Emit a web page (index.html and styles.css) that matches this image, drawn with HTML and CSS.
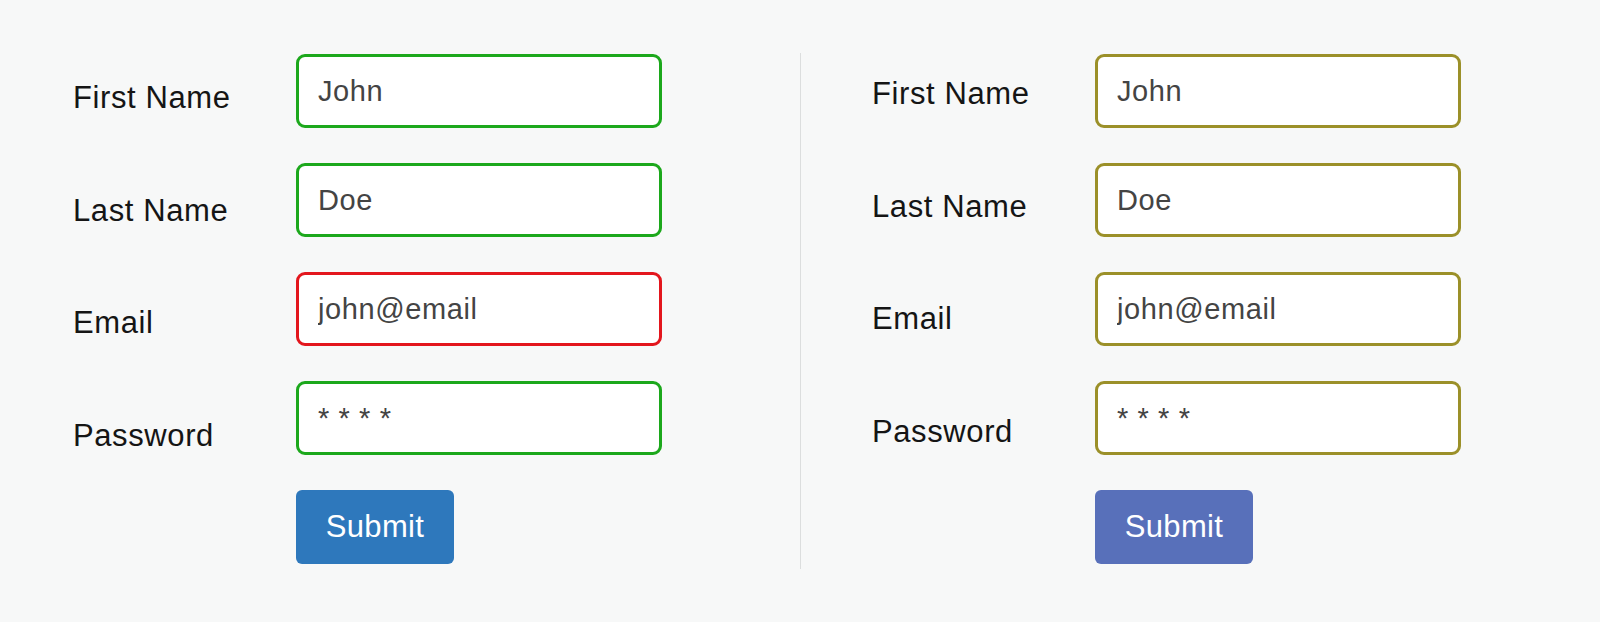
FILE: index.html
```html
<!DOCTYPE html>
<html lang="en">
<head>
  <meta charset="UTF-8" />
  <title>Form Validation States</title>
  <link rel="stylesheet" href="styles.css">
</head>
<body>

  <div class="page">

    <form class="signup-form validated">
      <div class="labels">
        <label for="first-a">First Name</label>
        <label for="last-a">Last Name</label>
        <label for="email-a">Email</label>
        <label for="pass-a">Password</label>
      </div>
      <div class="fields">
        <input id="first-a" class="field ok" type="text" value="John" />
        <input id="last-a" class="field ok" type="text" value="Doe" />
        <input id="email-a" class="field error" type="text" value="john@email" />
        <input id="pass-a" class="field ok" type="text" value="* * * *" />
        <button type="button" class="submit-button">Submit</button>
      </div>
    </form>

    <div class="divider"></div>

    <form class="signup-form neutral">
      <div class="labels">
        <label for="first-b">First Name</label>
        <label for="last-b">Last Name</label>
        <label for="email-b">Email</label>
        <label for="pass-b">Password</label>
      </div>
      <div class="fields">
        <input id="first-b" class="field" type="text" value="John" />
        <input id="last-b" class="field" type="text" value="Doe" />
        <input id="email-b" class="field" type="text" value="john@email" />
        <input id="pass-b" class="field" type="text" value="* * * *" />
        <button type="button" class="submit-button">Submit</button>
      </div>
    </form>

  </div>

</body>
</html>
```

FILE: styles.css
```css
body {
  font-family: "Liberation Sans", Arial, sans-serif;
  background-color: #f7f8f8;
  margin: 0;
  padding: 0;
}

.page {
  display: flex;
  align-items: flex-start;
  padding: 54px 0 0 73px;
}

.signup-form {
  display: flex;
}

.labels {
  display: flex;
  flex-direction: column;
  gap: 76.5px;
  width: 223px;
  padding-top: 26px;
}

.neutral .labels {
  padding-top: 22px;
}

.labels label {
  font-size: 31px;
  letter-spacing: 0.6px;
  line-height: 36px;
  height: 36px;
  color: #151515;
}

.fields {
  display: flex;
  flex-direction: column;
  align-items: flex-start;
  gap: 35px;
}

.field {
  box-sizing: border-box;
  width: 366px;
  height: 74px;
  padding: 0 19px;
  border: 3px solid #9b9029;
  border-radius: 9px;
  background-color: #fff;
  font-family: "Liberation Sans", Arial, sans-serif;
  font-size: 29px;
  letter-spacing: 0.6px;
  color: #444;
  outline: none;
}

.field.ok {
  border-color: #1ca81c;
}

.field.error {
  border-color: #e3161d;
}

.submit-button {
  width: 158px;
  height: 74px;
  border: none;
  border-radius: 6px;
  background-color: #2e78bc;
  color: white;
  font-family: "Liberation Sans", Arial, sans-serif;
  font-size: 31px;
  letter-spacing: 0.3px;
  cursor: pointer;
}

.neutral .submit-button {
  background-color: #5870ba;
}

.divider {
  width: 1px;
  height: 516px;
  margin: -1px 71px 0 138px;
  background-color: #dcdede;
}
```
